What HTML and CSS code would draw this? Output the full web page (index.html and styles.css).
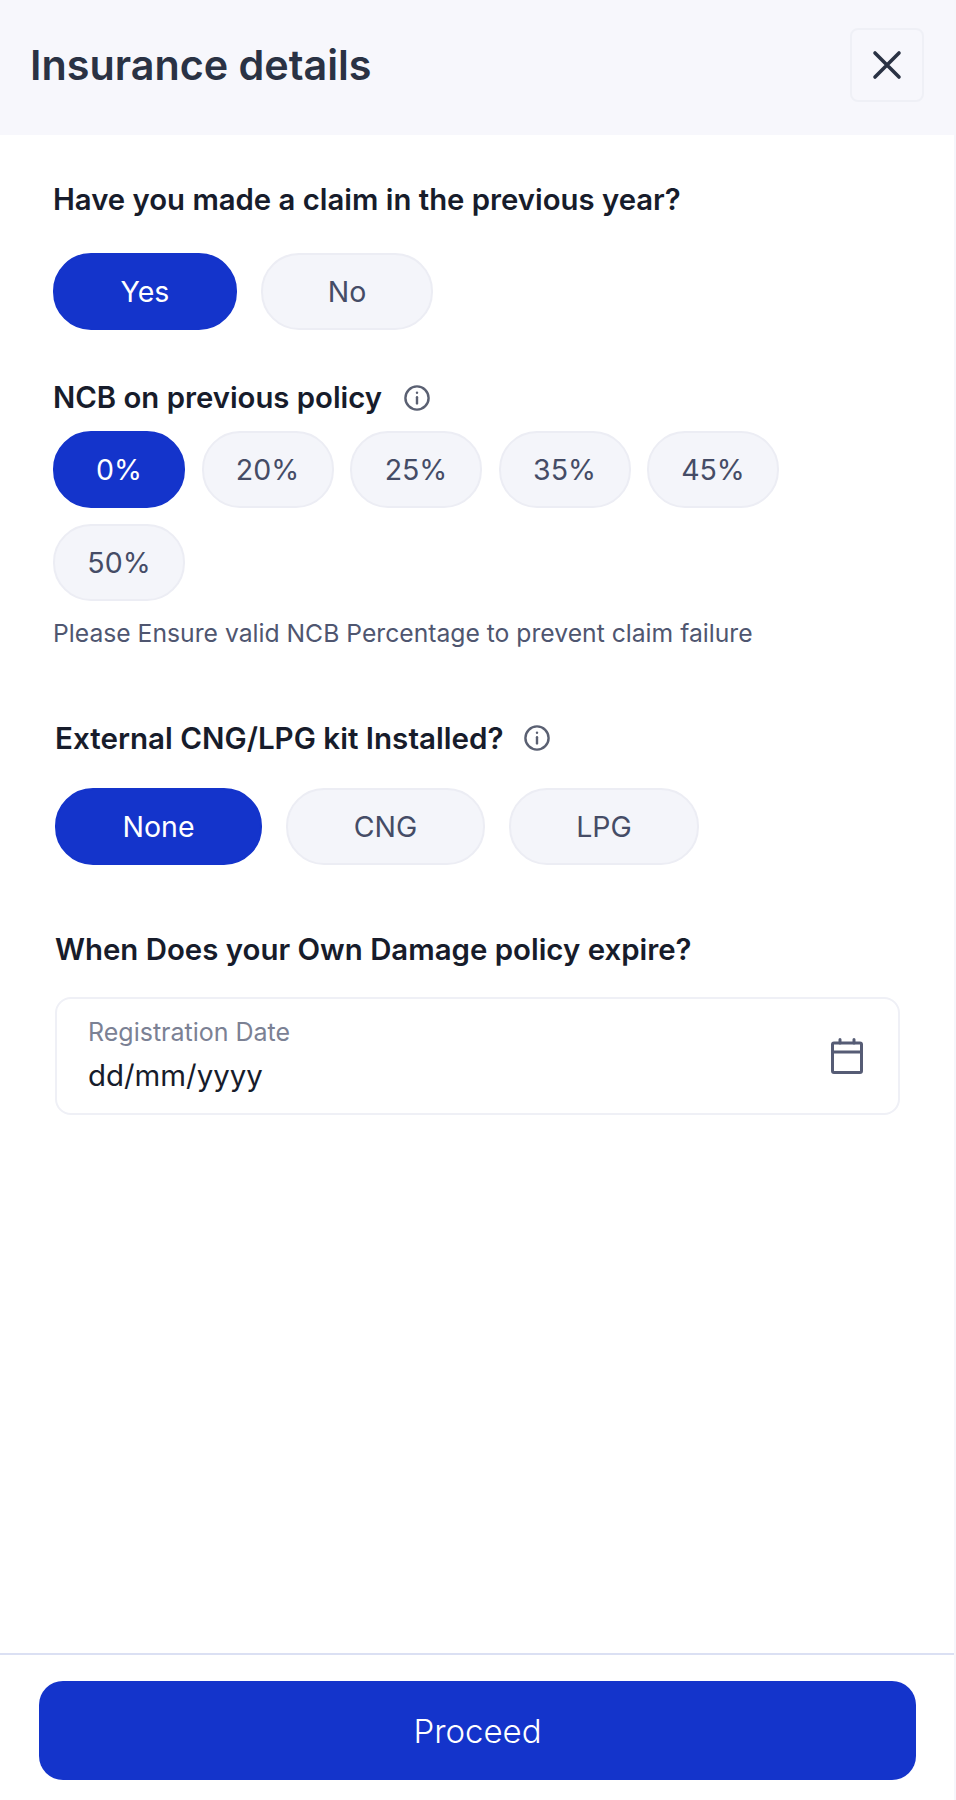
FILE: index.html
```html
<!DOCTYPE html>
<html lang="en">
<head>
  <meta charset="UTF-8" />
  <meta name="viewport" content="width=device-width, initial-scale=1.0"/>
  <title>Insurance details</title>
  <link rel="stylesheet" href="styles.css">
</head>
<body>
  <div class="page">
    <div class="header">
      <h1>Insurance details</h1>
      <button class="close" aria-label="Close">
        <svg width="34" height="34" viewBox="0 0 34 34" fill="none" stroke="#2a3244" stroke-width="3.6" stroke-linecap="round">
          <path d="M5 5L29 29M29 5L5 29"/>
        </svg>
      </button>
    </div>

    <div class="content">
      <div class="q q-claim">
        <div class="label">Have you made a claim in the previous year?</div>
        <div class="chips gap-lg">
          <button class="chip active w-yes">Yes</button>
          <button class="chip w-no">No</button>
        </div>
      </div>

      <div class="q q-ncb">
        <div class="label with-icon">NCB on previous policy
          <svg class="info" viewBox="0 0 28 28" fill="none" stroke="#5a6072" stroke-width="2.4" stroke-linecap="round">
            <circle cx="14" cy="14" r="11.6"/><path d="M14 13.2V19.4"/><path d="M14 8.6V8.8"/>
          </svg>
        </div>
        <div class="chips ncb-chips">
          <button class="chip active w-pct">0%</button>
          <button class="chip w-pct">20%</button>
          <button class="chip w-pct">25%</button>
          <button class="chip w-pct">35%</button>
          <button class="chip w-pct">45%</button>
          <button class="chip w-pct">50%</button>
        </div>
        <p class="hint">Please Ensure valid NCB Percentage to prevent claim failure</p>
      </div>

      <div class="q q-kit">
        <div class="label with-icon">External CNG/LPG kit Installed?
          <svg class="info" viewBox="0 0 28 28" fill="none" stroke="#5a6072" stroke-width="2.4" stroke-linecap="round">
            <circle cx="14" cy="14" r="11.6"/><path d="M14 13.2V19.4"/><path d="M14 8.6V8.8"/>
          </svg>
        </div>
        <div class="chips gap-lg">
          <button class="chip active w-none">None</button>
          <button class="chip w-cng">CNG</button>
          <button class="chip w-lpg">LPG</button>
        </div>
      </div>

      <div class="q q-date">
        <div class="label">When Does your Own Damage policy expire?</div>
        <div class="field">
          <div>
            <div class="field-label">Registration Date</div>
            <div class="field-value">dd/mm/yyyy</div>
          </div>
          <svg class="cal" viewBox="0 0 32 36" fill="none" stroke="#565c75" stroke-width="3" stroke-linecap="round" stroke-linejoin="round">
            <rect x="1.5" y="5" width="29" height="29.5" rx="1.5"/>
            <path d="M1.5 14H30.5M9 1.5V5M23 1.5V5"/>
          </svg>
        </div>
      </div>
    </div>

    <div class="footer">
      <button class="proceed">Proceed</button>
    </div>
  </div>
</body>
</html>
```

FILE: styles.css
```css
:root {
  --blue: #1434cb;
  --ink: #171c2b;
  --chip-bg: #f4f5fa;
  --chip-border: #ecedf4;
  --chip-text: #454c66;
}
* {
  box-sizing: border-box;
}
body {
  margin: 0;
  background: #fff;
  font-family: Inter, 'Noto Sans', sans-serif;
  color: var(--ink);
}
button {
  font-family: inherit;
  cursor: pointer;
}
.page {
  display: flex;
  flex-direction: column;
  height: 1800px;
  border-right: 2px solid #f6f6fb;
}
.header {
  height: 135px;
  background: #f7f7fc;
  display: flex;
  align-items: center;
  justify-content: space-between;
  padding: 0 30px 5px 30px;
}
h1 {
  margin: 0;
  font-size: 41.3px;
  font-weight: 600;
  color: #2a3244;
}
.close {
  width: 74px;
  height: 74px;
  display: flex;
  align-items: center;
  justify-content: center;
  padding: 0;
  background: #f7f7fc;
  border: 2px solid #eff0f6;
  border-radius: 8px;
}
.content {
  flex: 1;
  padding: 0 54px 0 53px;
}
.label {
  font-size: 29.3px;
  font-weight: 600;
  line-height: 36px;
}
.with-icon {
  display: flex;
  align-items: center;
  gap: 21px;
}
.info {
  width: 28px;
  height: 28px;
}
.q-claim {
  padding-top: 47px;
}
.q-claim .chips {
  margin-top: 35px;
}
.q-ncb {
  margin-top: 50px;
}
.q-ncb .chips {
  margin-top: 15px;
}
.q-kit {
  margin: 72px 0 0 2px;
}
.q-kit .label {
  font-size: 29.6px;
}
.q-kit .chips {
  margin-top: 32px;
}
.q-kit .with-icon {
  gap: 19px;
}
.q-date {
  margin: 67px 0 0 2px;
}
.q-date .label {
  font-size: 29.4px;
}
.chips {
  display: flex;
  flex-wrap: wrap;
}
.gap-lg {
  gap: 24px;
}
.ncb-chips {
  gap: 16px 16.5px;
}
.chip {
  height: 77px;
  padding: 0;
  border: 2px solid var(--chip-border);
  border-radius: 38px;
  background: var(--chip-bg);
  color: var(--chip-text);
  font-size: 28.5px;
  font-weight: 400;
}
.chip.active {
  background: var(--blue);
  border-color: var(--blue);
  color: #fff;
}
.w-yes { width: 184px; }
.w-no { width: 172px; }
.w-pct { width: 132px; }
.w-none { width: 207px; }
.w-cng { width: 199px; }
.w-lpg { width: 190px; }
.hint {
  margin: 17px 0 0;
  font-size: 24.7px;
  line-height: 30px;
  color: #4f5670;
}
.field {
  margin-top: 29px;
  width: 845px;
  height: 118px;
  border: 2px solid #eff0f6;
  border-radius: 16px;
  display: flex;
  align-items: center;
  justify-content: space-between;
  padding: 0 35px 0 31px;
}
.field-label {
  font-size: 25px;
  line-height: 28px;
  color: #7b8194;
}
.field-value {
  margin-top: 12px;
  font-size: 29.4px;
  line-height: 36px;
}
.cal {
  width: 32px;
  height: 36px;
}
.footer {
  height: 147px;
  border-top: 2px solid #dbe0f3;
  padding: 26px 38px 0 39px;
}
.proceed {
  width: 100%;
  height: 99px;
  border: 0;
  border-radius: 24px;
  background: var(--blue);
  color: #fff;
  font-size: 33px;
  font-weight: 300;
}
```
